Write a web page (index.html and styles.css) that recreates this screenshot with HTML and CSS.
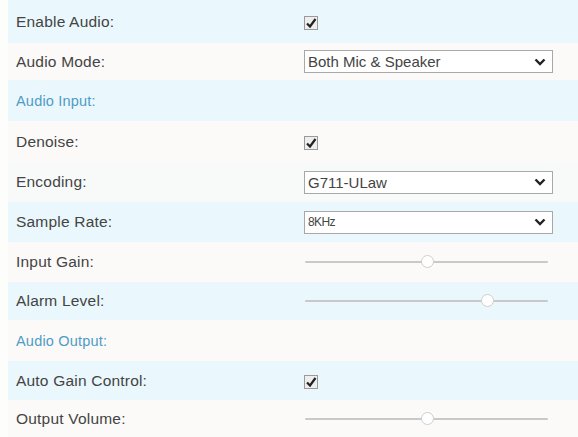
FILE: index.html
```html
<!DOCTYPE html>
<html>
<head>
<meta charset="utf-8">
<link rel="stylesheet" href="styles.css">
</head>
<body>
<div class="panel">
  <div class="row blue">
    <div class="label">Enable Audio:</div>
    <div class="ctrl"><span class="check"><svg viewBox="0 0 14 14" width="14" height="14"><path d="M3 7.5 L6 10.5 L11.5 3" fill="none" stroke="#222" stroke-width="2.2"/></svg></span></div>
  </div>
  <div class="row white">
    <div class="label">Audio Mode:</div>
    <div class="ctrl"><div class="select"><span>Both Mic &amp; Speaker</span><svg class="chev" viewBox="0 0 12 8" width="12" height="8"><path d="M1.5 1.5 L6 6 L10.5 1.5" fill="none" stroke="#222" stroke-width="2.4"/></svg></div></div>
  </div>
  <div class="row blue">
    <div class="label section">Audio Input:</div>
  </div>
  <div class="row white">
    <div class="label">Denoise:</div>
    <div class="ctrl"><span class="check"><svg viewBox="0 0 14 14" width="14" height="14"><path d="M3 7.5 L6 10.5 L11.5 3" fill="none" stroke="#222" stroke-width="2.2"/></svg></span></div>
  </div>
  <div class="row white2">
    <div class="label">Encoding:</div>
    <div class="ctrl"><div class="select"><span>G711-ULaw</span><svg class="chev" viewBox="0 0 12 8" width="12" height="8"><path d="M1.5 1.5 L6 6 L10.5 1.5" fill="none" stroke="#222" stroke-width="2.4"/></svg></div></div>
  </div>
  <div class="row blue">
    <div class="label">Sample Rate:</div>
    <div class="ctrl"><div class="select"><span class="small">8KHz</span><svg class="chev" viewBox="0 0 12 8" width="12" height="8"><path d="M1.5 1.5 L6 6 L10.5 1.5" fill="none" stroke="#222" stroke-width="2.4"/></svg></div></div>
  </div>
  <div class="row white">
    <div class="label">Input Gain:</div>
    <div class="ctrl"><div class="slider"><div class="track"></div><div class="thumb" style="left:50.6%"></div></div></div>
  </div>
  <div class="row blue">
    <div class="label">Alarm Level:</div>
    <div class="ctrl"><div class="slider"><div class="track"></div><div class="thumb" style="left:75.3%"></div></div></div>
  </div>
  <div class="row white">
    <div class="label section">Audio Output:</div>
  </div>
  <div class="row blue">
    <div class="label">Auto Gain Control:</div>
    <div class="ctrl"><span class="check"><svg viewBox="0 0 14 14" width="14" height="14"><path d="M3 7.5 L6 10.5 L11.5 3" fill="none" stroke="#222" stroke-width="2.2"/></svg></span></div>
  </div>
  <div class="row white">
    <div class="label">Output Volume:</div>
    <div class="ctrl"><div class="slider"><div class="track"></div><div class="thumb" style="left:50.6%"></div></div></div>
  </div>
</div>
</body>
</html>
```
FILE: styles.css
```css
html, body {
  margin: 0;
  padding: 0;
  background: #fdfdfc;
  width: 578px;
  height: 437px;
  overflow: hidden;
  font-family: "Liberation Sans", Arial, sans-serif;
}
.panel {
  display: grid;
  grid-template-rows: 43px 37px 41px 41px 40px 40px 40px 38px 41px 39px 37px;
  margin-left: 8px;
}
.row {
  display: flex;
  align-items: center;
}
.blue { background: #eaf7fc; }
.white { background: #fbfaf8; }
.white2 { background: #f8fafa; }
.label {
  width: 288px;
  padding-left: 8px;
  font-size: 15.5px;
  color: #444;
  letter-spacing: 0.2px;
}
.label.section {
  color: #4f9cc6;
  font-size: 14.5px;
}
.ctrl {
  display: flex;
  align-items: center;
}
.check {
  width: 14px;
  height: 14px;
  border: 1px solid #9a9a9a;
  background: #eeeeee;
  display: flex;
  box-sizing: border-box;
  margin-top: 2px;
}
.check svg { display: block; margin: -1px; }
.select {
  width: 249px;
  height: 23px;
  box-sizing: border-box;
  border: 1px solid #a8a8a8;
  background: #fff;
  display: flex;
  align-items: center;
  justify-content: space-between;
  padding: 0 6px 0 3px;
  font-size: 15px;
  color: #444;
}
.select .small {
  font-size: 12px;
  letter-spacing: -0.6px;
}
.chev { display: block; }
.slider {
  position: relative;
  width: 243px;
  height: 14px;
  margin-left: 1px;
}
.track {
  position: absolute;
  left: 0;
  right: 0;
  top: 6px;
  height: 2px;
  background: #c9c9c9;
  border-radius: 1px;
}
.thumb {
  position: absolute;
  top: 0;
  width: 13px;
  height: 13px;
  margin-left: -7px;
  box-sizing: border-box;
  border: 1px solid #cfcfcf;
  border-radius: 50%;
  background: #fff;
}
```
